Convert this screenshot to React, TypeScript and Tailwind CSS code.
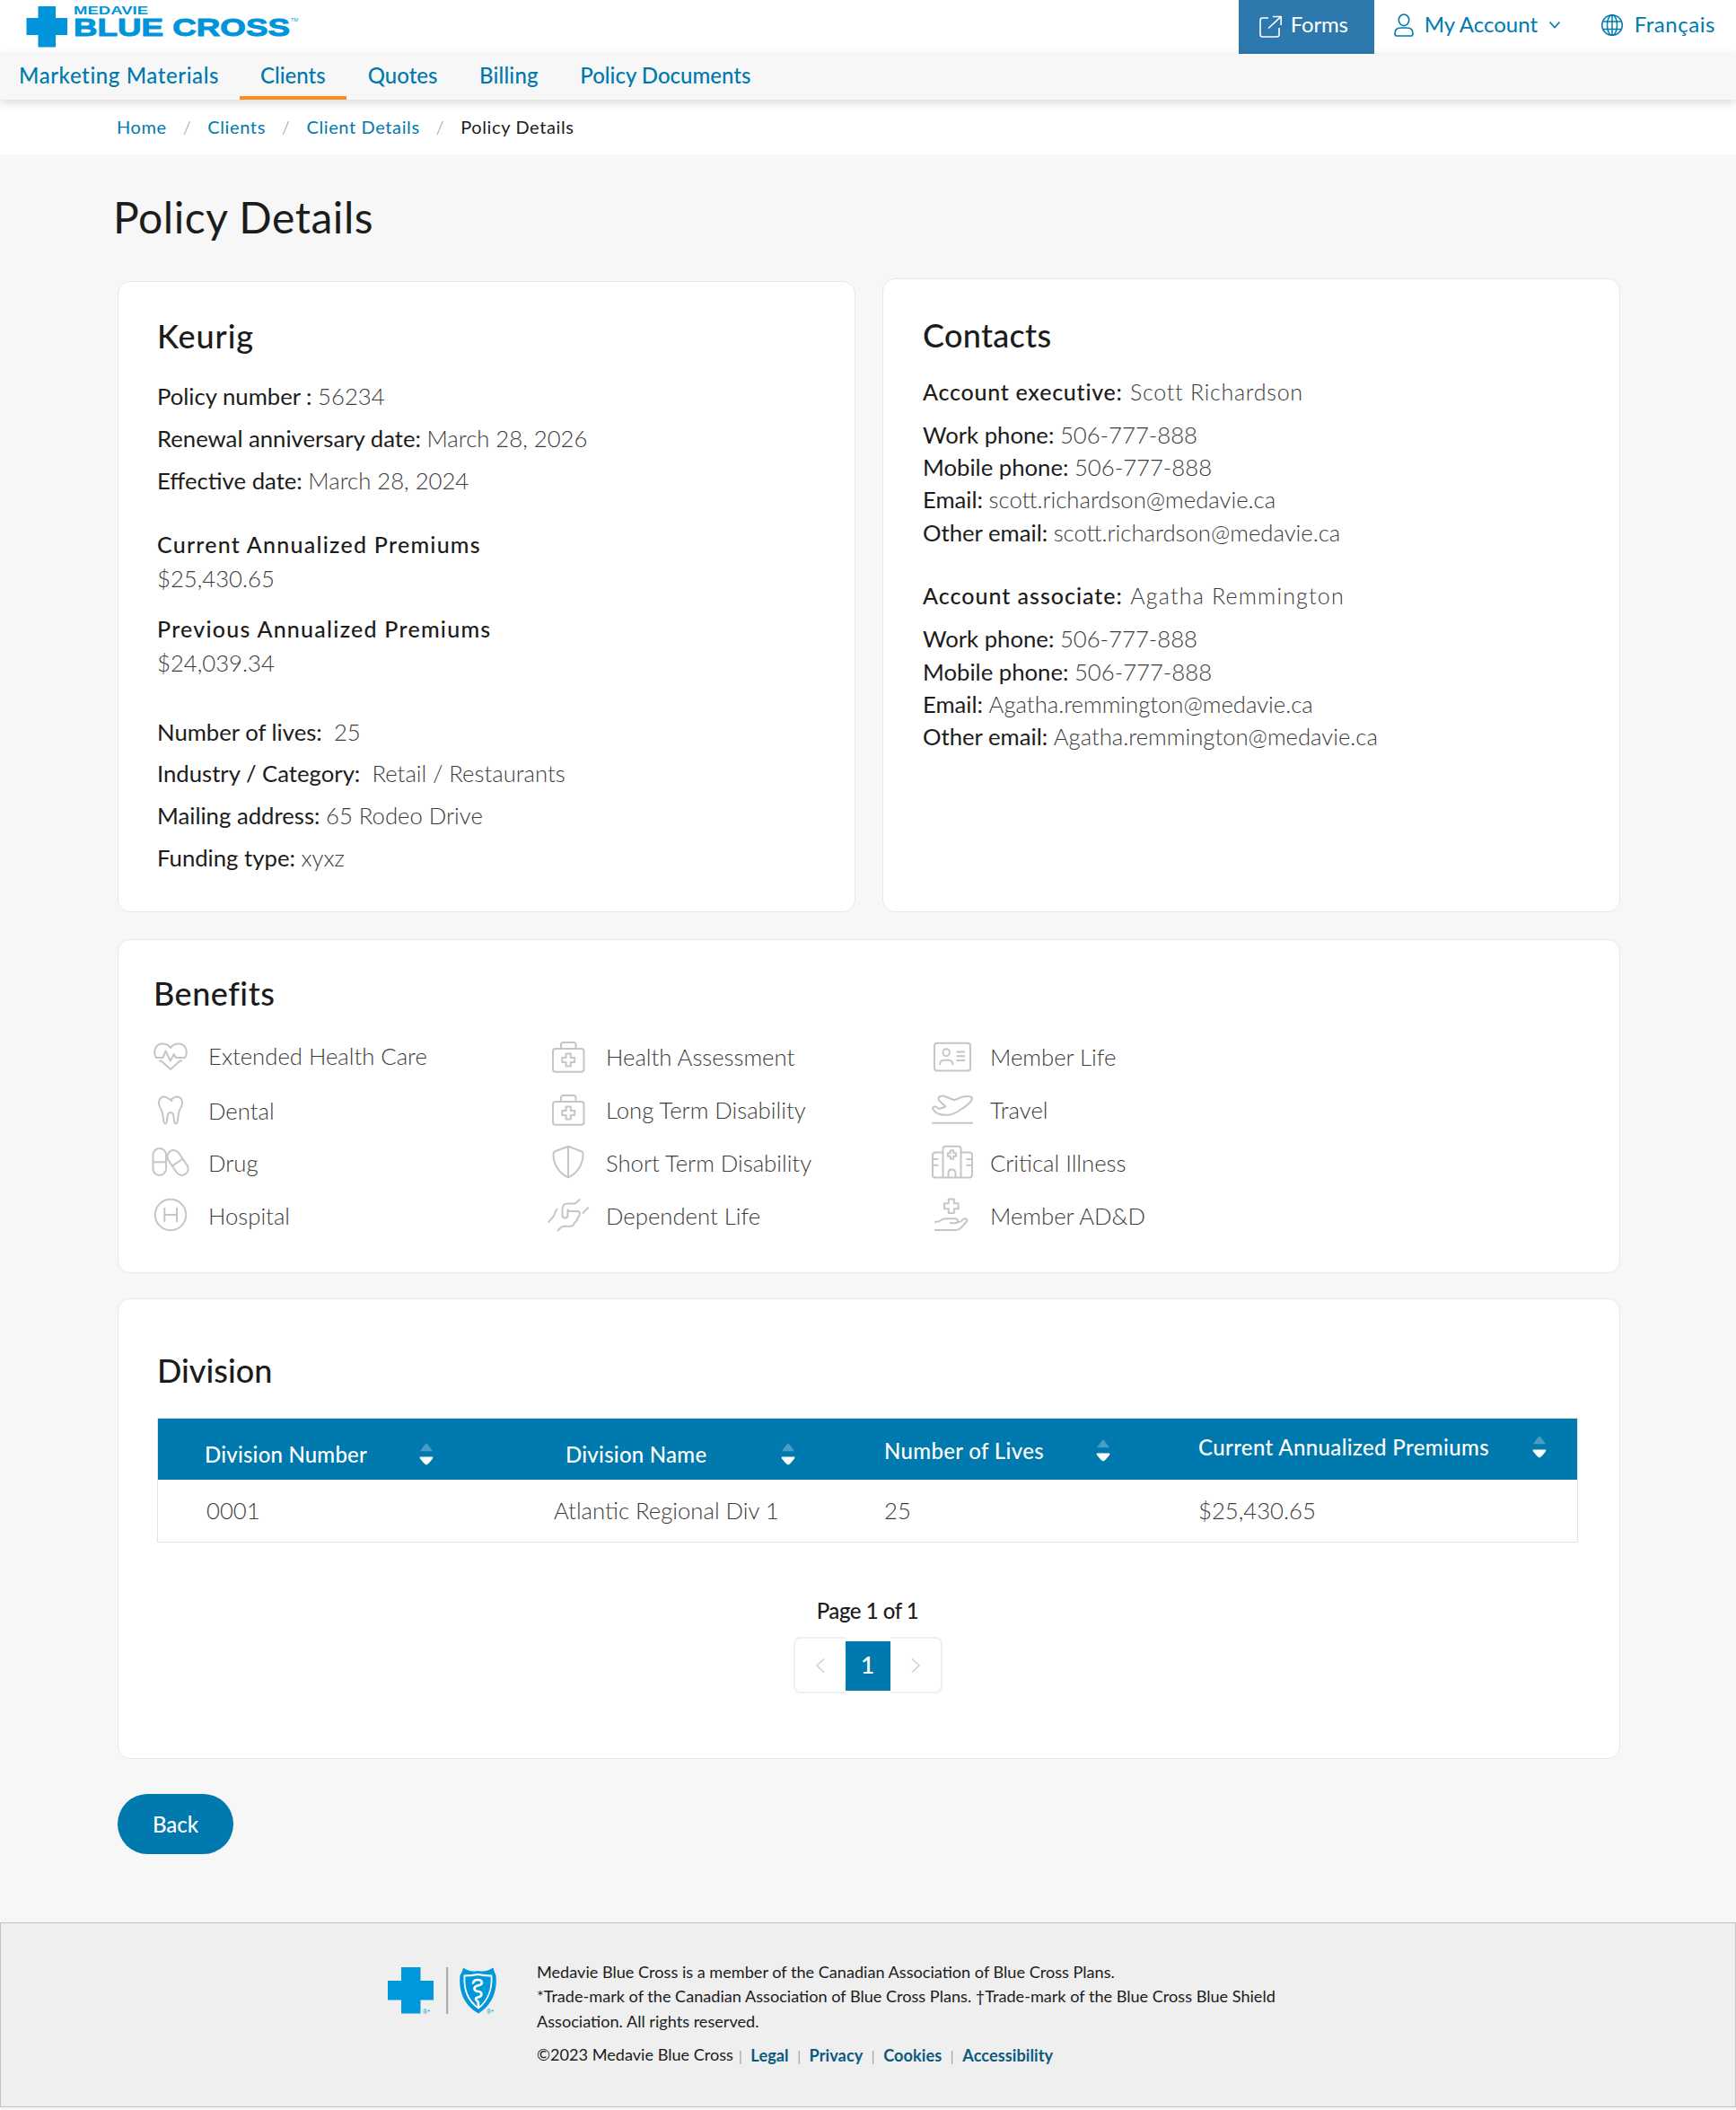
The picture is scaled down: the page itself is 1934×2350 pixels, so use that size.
import type { ReactNode } from "react";

function Logo() {
  return (
    <svg width="340" height="60" viewBox="0 0 340 60" fill="#0094da">
      <path d="M42.500 7h19.500v13h13v19h-13v13.500h-19.500V39H29.500V20h13z" />
      <text x="82" y="16" fontFamily="Liberation Sans, sans-serif" fontWeight="700" fontSize="12.500" textLength="83" lengthAdjust="spacingAndGlyphs">
        MEDAVIE
      </text>
      <text x="82" y="39.500" fontFamily="Liberation Sans, sans-serif" fontWeight="700" fontSize="28" stroke="#0094da" strokeWidth="1" textLength="241" lengthAdjust="spacingAndGlyphs">
        BLUE CROSS
      </text>
      <text x="324" y="24" fontFamily="Liberation Sans, sans-serif" fontWeight="400" fontSize="6" textLength="8" lengthAdjust="spacingAndGlyphs">
        TM
      </text>
    </svg>
  );
}

function TopBar() {
  return (
    <header className="flex h-[60px] justify-between bg-white text-[24px] text-[#007aae]">
      <Logo />
      <div className="flex h-[60px]">
        <a className="flex w-[151px] items-center bg-[#2d79ae] pl-[22px] text-white">
          <svg width="27" height="27" viewBox="0 0 27 27" fill="none" stroke="#ffffff" strokeWidth="1.600" className="mr-[9px] mb-[1px]">
            <path d="M11 4H4.500Q2 4 2 6.500V22.500Q2 25 4.500 25H20.500Q23 25 23 22.500V15M16 2.500H25.200V12M25 2.700 11 15.500" />
          </svg>
          <span className="pb-[6px] tracking-[-0.2px]">Forms</span>
        </a>
        <a className="flex items-center pl-[20px]">
          <svg width="26" height="28" viewBox="0 0 26 28" fill="none" stroke="#007aae" strokeWidth="1.600" className="mr-[10px] mb-[4px]">
            <ellipse cx="13" cy="8.300" rx="5.700" ry="6.300" />
            <path d="M3 23.500C3 19 6 17 9.500 17h7c3.500 0 6.500 2 6.500 6.500 0 1.800-.6 2.500-2 2.500H5c-1.400 0-2-.7-2-2.500z" />
          </svg>
          <span className="w-[138px] pb-[6px]">My Account</span>
          <svg width="14" height="10" viewBox="0 0 14 10" fill="none" stroke="#007aae" strokeWidth="1.600" className="mb-[4px]">
            <path d="M1.500 1.500 7 7.500l5.500-6" />
          </svg>
        </a>
        <a className="flex items-center pr-[23px] pl-[44px]">
          <svg width="26" height="26" viewBox="0 0 26 26" fill="none" stroke="#007aae" strokeWidth="1.500" className="mr-[12px] mb-[4px]">
            <circle cx="13" cy="13" r="11.300" />
            <ellipse cx="13" cy="13" rx="5.500" ry="11.300" />
            <path d="M13 1.700v22.600M2.500 9h21M2.500 17.500h21" />
          </svg>
          <span className="pb-[6px] tracking-[0.55px]">Français</span>
        </a>
      </div>
    </header>
  );
}

function NavBar() {
  return (
    <nav className="relative flex h-[51px] bg-[#f7f7f7] text-[24px] font-medium text-[#007aae] shadow-[0_3px_10px_rgba(0,0,0,0.16)]">
      <a className="pr-[22.5px] pl-[21px] leading-[47px] tracking-[0.6px]">Marketing Materials</a>
      <a className="h-[51px] border-b-4 border-[#fb8c1e] px-[23.5px] leading-[47px]">Clients</a>
      <a className="px-[23.5px] leading-[47px]">Quotes</a>
      <a className="px-[23px] leading-[47px] tracking-[0.2px]">Billing</a>
      <a className="px-[23.5px] leading-[47px]">Policy Documents</a>
    </nav>
  );
}

function Breadcrumb() {
  const sep = <span className="w-[45.5px] text-center font-light text-[#8a8a8a]">/</span>;
  return (
    <div className="flex h-[61px] items-center bg-white pb-px pl-[130px] text-[20px] tracking-[0.62px] text-[#007aae]">
      <a>Home</a>
      {sep}
      <a>Clients</a>
      {sep}
      <a>Client Details</a>
      {sep}
      <span className="text-[#1c1c1c]">Policy Details</span>
    </div>
  );
}

function Field({ label, children }: { label: string; children: ReactNode }) {
  return (
    <p className="whitespace-pre">
      {label} <span className="font-light text-[#3c3c3c]">{children}</span>
    </p>
  );
}

function Premium({ label, value }: { label: string; value: string }) {
  return (
    <div className="leading-[38px]">
      <h3 className="text-[25px] font-medium tracking-[1.25px]">{label}</h3>
      <p className="font-light text-[#3c3c3c]">{value}</p>
    </div>
  );
}

function PolicyCard() {
  return (
    <section className="h-[703px] w-[822px] rounded-[14px] border border-[#e8e8e8] bg-white pt-[38px] pl-[43px] text-[25.7px]">
      <h2 className="text-[36px] leading-[44px] font-medium tracking-[0.9px]">Keurig</h2>
      <div className="mt-[22px] leading-[47px]">
        <Field label="Policy number :">56234</Field>
        <Field label="Renewal anniversary date:">March 28, 2026</Field>
        <Field label="Effective date:">March 28, 2024</Field>
      </div>
      <div className="mt-[28px] flex flex-col gap-[18px]">
        <Premium label="Current Annualized Premiums" value="$25,430.65" />
        <Premium label="Previous Annualized Premiums" value="$24,039.34" />
      </div>
      <div className="mt-[34.5px] leading-[46.8px]">
        <Field label="Number of lives: ">25</Field>
        <Field label="Industry / Category: ">Retail / Restaurants</Field>
        <Field label="Mailing address:">65 Rodeo Drive</Field>
        <Field label="Funding type:">xyxz</Field>
      </div>
    </section>
  );
}

type ContactProps = { role: ReactNode; name: ReactNode; email: string };

function Contact({ role, name, email }: ContactProps) {
  return (
    <div>
      <h3 className="text-[25px] leading-[36px] font-medium">
        {role} {name}
      </h3>
      <div className="mt-[12px] leading-[36.4px]">
        <Field label="Work phone:">506-777-888</Field>
        <Field label="Mobile phone:">506-777-888</Field>
        <Field label="Email:">{email}</Field>
        <Field label="Other email:">{email}</Field>
      </div>
    </div>
  );
}

function ContactsCard() {
  return (
    <section className="h-[706px] w-[822px] rounded-[14px] border border-[#e8e8e8] bg-white pt-[40px] pl-[44px] text-[25.7px]">
      <h2 className="text-[36px] leading-[44px] font-medium tracking-[0.3px]">Contacts</h2>
      <div className="mt-[22.5px] flex flex-col gap-[34px]">
        <Contact
          role={<span className="mr-[2px] tracking-[0.75px]">Account executive:</span>}
          name={<span className="font-light tracking-[0.75px] text-[#3c3c3c]">Scott Richardson</span>}
          email="scott.richardson@medavie.ca"
        />
        <Contact
          role={<span className="mr-[2px] tracking-[1px]">Account associate:</span>}
          name={<span className="font-light tracking-[1.2px] text-[#3c3c3c]">Agatha Remmington</span>}
          email="Agatha.remmington@medavie.ca"
        />
      </div>
    </section>
  );
}

const plus = (cx: number, cy: number, r: number, t: number) =>
  `M${cx - t} ${cy - r}h${2 * t}v${r - t}h${r - t}v${2 * t}h${t - r}v${r - t}h${-2 * t}v${t - r}h${t - r}v${-2 * t}h${r - t}z`;

const kit = (
  <>
    <rect x="6" y="11" width="34.500" height="25.700" rx="3" />
    <path d="M15 11V6.500Q15 4 17.500 4h11.500q2.500 0 2.500 2.500V11" />
    <path d={plus(23.2, 23.5, 7, 2.6)} />
  </>
);

const icons: Record<string, ReactNode> = {
  heart: (
    <path d="M7 21C3 14 6 5.500 14 5.500c4 0 7 1.500 9 4.500 2-3 5-4.500 9-4.500 8 0 11 8.500 7 15.500H29l-2.200-4-4 7.500-5.200-11L14.500 21zM10 24.500h2.500L23 34l10.500-9.500H36" />
  ),
  tooth: (
    <path d="M25 10.500C20 6.500 17.500 5 15 5.500 10.500 6.500 9 11 10.500 15.500c1 3 3 4.500 3.500 8.500l1.500 9.500c.5 2.500 3 2.500 3.300 0l1-7.500c.7-4 5.700-4 6.400 0l1 7.500c.3 2.500 2.800 2.500 3.300 0L32 24c.5-4 2.500-5.500 3.500-8.500 1.500-4.500 0-9-4.500-10-2.500-.5-5 1-8 3.500" />
  ),
  pills: (
    <>
      <rect x="3.500" y="5" width="14.500" height="30" rx="7.250" />
      <path d="M3.500 20.300H18" />
      <g transform="rotate(-34 31 21)">
        <rect x="23.900" y="5.700" width="14.200" height="30.600" rx="7.100" />
        <path d="M23.900 20.500h14.200" />
      </g>
    </>
  ),
  hospital: (
    <>
      <circle cx="23" cy="20" r="17.200" />
      <path d="M16.300 12v16M30 12v16M16.300 20H30" />
    </>
  ),
  kit,
  shield: <path d="M23 2.800 37 8q2.500 1 2.500 3.500C39.500 23 33 33 23 37.300 13 33 6.500 23 6.500 11.500 6.500 9 9 8 9 8zM23 3v34" />,
  hands: (
    <path d="M.7 28.700 6.500 22Q7.500 20.500 8 18.500T11 13M36.300 2.500 32 6.500q-1 .9-2.500.9h-7q-6 0-6 6v7q0 3 3 3t3-3v-6l1.500 1.500H33q3 0 3 3-.5 3-2.500 4.500-.5 4-4 6-.8 3.300-3.500 3.300h-8Q15.500 33 14 35l-3 3M39 18.700l3-3.500 3.700-3.500" />
  ),
  member: (
    <>
      <rect x="3" y="4.700" width="40" height="30.800" rx="3" />
      <ellipse cx="16.200" cy="15.300" rx="3.700" ry="4" />
      <path d="M9 29c0-3.500 2-5.200 5-5.200h4.500c3 0 5 1.700 5 5.200M27.500 14.500H37M27.500 19.300H37M27.500 24H37" />
    </>
  ),
  travel: (
    <path d="M15.500 16.500 8 9.500Q6.500 6.500 9.500 5q2.500-1 5 0L25 9.300 34 5.800q6-1.800 10.300 0 1.500 2.200-.8 5.200Q39 16 32 20 25.500 24.500 20 25.500q-7 1-12-.8Q3.500 23 1 19q.2-3 3.500-2.300L8.500 19zM.3 34.700h45.400" />
  ),
  critical: (
    <>
      <path d="M12.500 37.500V5.500q0-2.700 2.700-2.700h14.600q2.700 0 2.700 2.700v32M12.500 9.500H4Q1 9.500 1 12.500v22q0 3 3 3h38q3 0 3-3v-22q0-3-3-3h-9.500M1 17h6.500M1 23.700h6.500M38.500 17H45M38.500 23.700H45M18.500 37.500V33q0-4.500 4-4.500t4 4.500v4.500" />
      <path d={plus(22.5, 12, 4.7, 1.7)} />
    </>
  ),
  care: (
    <>
      <path d={plus(21.8, 10.3, 7.8, 3)} />
      <path d="M3 27.700h2.500q2.500 0 4.500-1.500 2.500-2 6-2h10q3 0 3 2.500T26 29.300h-6M29 28.500q4-1 6-3.500 2.500-1.500 4 0 1 1.500-1 3.500l-5.500 6q-2.500 2.500-6 2.500H3" />
    </>
  ),
};

type Benefit = { icon: string; label: string; shift?: string };

const benefitColumns: { width: string; items: Benefit[] }[] = [
  {
    width: "w-[443px]",
    items: [
      { icon: "heart", label: "Extended Health Care", shift: "pb-[3px]" },
      { icon: "tooth", label: "Dental", shift: "pt-[2px]" },
      { icon: "pills", label: "Drug" },
      { icon: "hospital", label: "Hospital" },
    ],
  },
  {
    width: "w-[428px]",
    items: [
      { icon: "kit", label: "Health Assessment" },
      { icon: "kit", label: "Long Term Disability" },
      { icon: "shield", label: "Short Term Disability" },
      { icon: "hands", label: "Dependent Life" },
    ],
  },
  {
    width: "w-[429px]",
    items: [
      { icon: "member", label: "Member Life" },
      { icon: "travel", label: "Travel" },
      { icon: "critical", label: "Critical Illness" },
      { icon: "care", label: "Member AD&D" },
    ],
  },
];

function BenefitsCard() {
  return (
    <section className="mt-[30px] h-[372px] w-[1674px] rounded-[14px] border border-[#e8e8e8] bg-white pt-[37px] pl-[35px]">
      <h2 className="pl-[4px] text-[36px] leading-[44px] font-medium tracking-[0.5px]">Benefits</h2>
      <div className="mt-[20px] flex">
        {benefitColumns.map((column, i) => (
          <ul key={i} className={column.width}>
            {column.items.map((b) => (
              <li key={b.label} className="flex h-[58.8px] items-center gap-[19px]">
                <svg
                  width="46"
                  height="40"
                  viewBox="0 0 46 40"
                  fill="none"
                  stroke="#c6c6c6"
                  strokeWidth="2"
                  strokeLinejoin="round"
                  className="mb-[1px] shrink-0 overflow-visible"
                >
                  {icons[b.icon]}
                </svg>
                <span className={`text-[25.7px] leading-[36px] font-light text-[#3c3c3c] ${b.shift ?? ""}`}>{b.label}</span>
              </li>
            ))}
          </ul>
        ))}
      </div>
    </section>
  );
}

function SortIcon() {
  return (
    <svg width="16" height="25" viewBox="0 0 16 25">
      <path d="M8 0.500Q9 .5 15 9.300H1Q7 .5 8 .5z" fill="#4a9dc4" />
      <path d="M1 15.500h14Q15.800 16 15 17.500 9.500 24.500 8 24.500T1 17.500Q.2 16 1 15.500z" fill="#ffffff" />
    </svg>
  );
}

function DivisionCard() {
  const cols = "grid grid-cols-[389px_368px_350px_1fr] items-center pl-[52px]";
  return (
    <section className="mt-[28px] h-[513px] w-[1674px] rounded-[14px] border border-[#e8e8e8] bg-white pt-[57px] pl-[43px]">
      <h2 className="text-[36px] leading-[44px] font-medium">Division</h2>
      <div className="mt-[31px] w-[1583px] border border-[#e4e4e4]">
        <div className={`${cols} h-[68px] bg-[#007aae] text-[24px] font-medium text-white`}>
          <div className="flex items-center pt-[11px]">
            <span className="w-[239px] tracking-[0.2px]">Division Number</span>
            <SortIcon />
          </div>
          <div className="flex items-center pt-[11px] pl-[13px]">
            <span className="w-[240px] tracking-[0.25px]">Division Name</span>
            <SortIcon />
          </div>
          <div className="flex items-center pt-[3px]">
            <span className="w-[236px] tracking-[0.34px]">Number of Lives</span>
            <SortIcon />
          </div>
          <div className="flex items-center pb-[5px]">
            <span className="w-[372px] tracking-[0.37px]">Current Annualized Premiums</span>
            <SortIcon />
          </div>
        </div>
        <div className={`${cols} h-[69px] text-[25.7px] font-light text-[#3c3c3c]`}>
          <span className="pl-[2px]">0001</span>
          <span>Atlantic Regional Div 1</span>
          <span>25</span>
          <span>$25,430.65</span>
        </div>
      </div>
      <div className="mt-[61px] flex w-[1583px] flex-col items-center">
        <p className="text-[24px] leading-[30px] font-medium tracking-[-0.45px]">Page 1 of 1</p>
        <div className="mt-[14px] flex items-center">
          <div className="flex h-[63px] w-[58px] items-center justify-center rounded-l-[8px] border-2 border-r-0 border-[#efefef]">
            <svg width="12" height="18" viewBox="0 0 12 18" fill="none" stroke="#cfcfcf" strokeWidth="1.500">
              <path d="M10 1.500 2 9l8 7.500" />
            </svg>
          </div>
          <div className="mt-[2px] flex h-[55px] w-[50px] items-center justify-center bg-[#007aae] pb-[2px] text-[27px] font-medium text-white">1</div>
          <div className="flex h-[63px] w-[58px] items-center justify-center rounded-r-[8px] border-2 border-l-0 border-[#efefef]">
            <svg width="12" height="18" viewBox="0 0 12 18" fill="none" stroke="#cfcfcf" strokeWidth="1.500">
              <path d="m2 1.500 8 7.500-8 7.500" />
            </svg>
          </div>
        </div>
      </div>
    </section>
  );
}

function FooterLogo() {
  return (
    <svg width="126" height="56" viewBox="0 0 126 56" fill="#0098dc">
      <path d="M15 0h21.500v15H51v21.500H36.500V51.500H15V36.500H0V15h15z" />
      <text x="39" y="52" fontFamily="Liberation Sans, sans-serif" fontSize="7">
        ®*
      </text>
      <path d="M65 0h2.300v52H65z" fill="#adadad" />
      <path d="M84 .5Q92 6 100.500 4 109 6 117.500.5 118.500 6 120.500 9C122.500 28 115 43 101 51.500 86 43 78.500 28 80.500 9 83 6 84 .5 84 .5z" />
      <path d="M85.500 9.500Q93 9.500 100.500 8q7.500 1.500 15 1.500C116.500 25 111 38 101 45.500 90 38 84.500 25 85.500 9.500z" fill="none" stroke="#ffffff" strokeWidth="1.800" />
      <path d="M95 17.500q1-3.500 5-3.500 5 0 5 3.500-1 2.500-5 3-4 1-3.500 4 1.500 2.500 4.500 2.500 3.500.5 3.500 3t-4 3.500-1.500 3.500 2 2 0 4" fill="none" stroke="#ffffff" strokeWidth="2.600" strokeLinecap="round" />
      <text x="110" y="52" fontFamily="Liberation Sans, sans-serif" fontSize="7">
        ®*
      </text>
    </svg>
  );
}

function Footer() {
  const bar = <span className="text-[16px] font-light text-[#555555]">|</span>;
  return (
    <footer className="mt-[76px] flex h-[206px] border border-[#c2c2c2] bg-[#efefef] pl-[431px] text-[18.13px] leading-[27.4px] text-[#1c1c1c]">
      <div className="mt-[49px] w-[166px]">
        <FooterLogo />
      </div>
      <div className="pt-[41px]">
        <p>Medavie Blue Cross is a member of the Canadian Association of Blue Cross Plans.</p>
        <p>*Trade-mark of the Canadian Association of Blue Cross Plans. †Trade-mark of the Blue Cross Blue Shield</p>
        <p>Association. All rights reserved.</p>
        <div className="mt-[9px] flex items-center">
          <span className="mr-[6px] pb-[1px]">©2023 Medavie Blue Cross</span>
          <div className="flex items-center gap-[9.5px] pt-[2px] font-bold tracking-[0.08px] text-[#0a5a80]">
            {bar}
            <a>Legal</a>
            {bar}
            <a>Privacy</a>
            {bar}
            <a>Cookies</a>
            {bar}
            <a>Accessibility</a>
          </div>
        </div>
      </div>
    </footer>
  );
}

export default function App() {
  return (
    <div className="h-[2350px] w-[1934px] overflow-hidden bg-[#f7f7f7] font-['Lato',sans-serif] text-[#1c1c1c]">
      <TopBar />
      <NavBar />
      <Breadcrumb />
      <main className="pl-[131px]">
        <h1 className="-ml-[5px] pt-[40px] text-[48px] leading-[60px] tracking-[0.55px]">Policy Details</h1>
        <div className="mt-[38px] flex items-end gap-[30px]">
          <PolicyCard />
          <ContactsCard />
        </div>
        <BenefitsCard />
        <DivisionCard />
        <button className="mt-[39px] mb-px flex h-[67px] w-[129px] items-center justify-center rounded-full bg-[#007aae] text-[24px] font-medium text-white">Back</button>
      </main>
      <Footer />
    </div>
  );
}
